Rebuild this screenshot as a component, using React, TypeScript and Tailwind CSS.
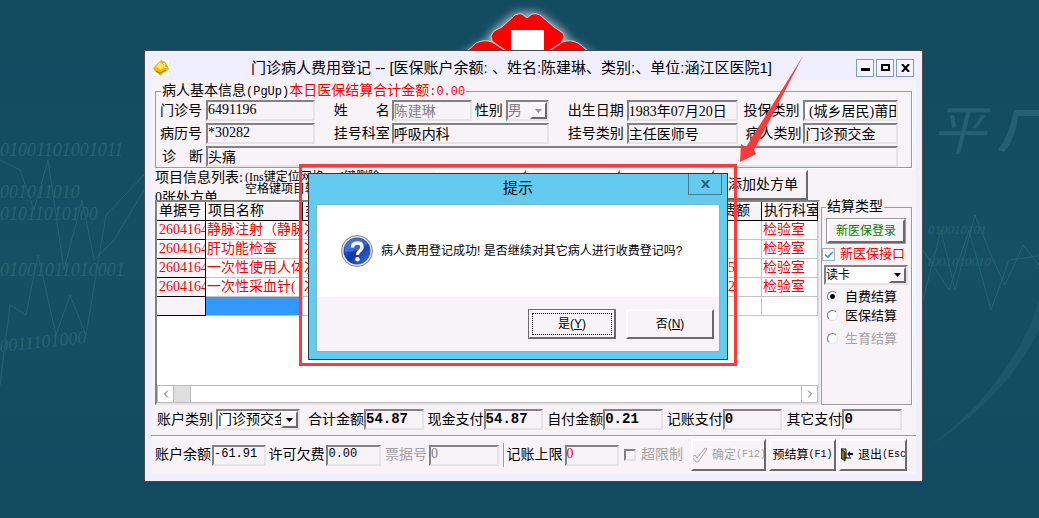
import type { ReactNode } from "react";
import clsx from "clsx";
import { Check, ChevronLeft, ChevronRight } from "lucide-react";

const sunken =
  "border-2 border-t-[#848184] border-l-[#848184] border-r-[#e6e3e6] border-b-[#e6e3e6]";
const raised =
  "border-2 border-t-white border-l-white border-r-[#6b696b] border-b-[#6b696b] bg-[#f7f3f7]";
const etched = "border border-[#9c9a9c] shadow-[1px_1px_0_#fff]";
const mono = "font-['Liberation_Mono','Noto_Sans_CJK_SC',monospace]";

const items = [
  { no: "2604164", name: "静脉注射（静脉", unit: "次", fee: "3", dept: "检验室" },
  { no: "2604164", name: "肝功能检查", unit: "次", fee: "", dept: "检验室" },
  { no: "2604164", name: "一次性使用人体", unit: "次", fee: "75", dept: "检验室" },
  { no: "2604164", name: "一次性采血针(", unit: "次", fee: "32", dept: "检验室" },
];

const totals = [
  { id: "total", label: "合计金额", value: "54.87" },
  { id: "cash", label: "现金支付", value: "54.87" },
  { id: "self", label: "自付金额", value: "0.21" },
  { id: "account", label: "记账支付", value: "0" },
  { id: "other", label: "其它支付", value: "0" },
];

function Field({ id, value, className }: { id: string; value: string; className?: string }) {
  return (
    <input
      id={id}
      defaultValue={value}
      className={clsx("h-[21px] w-full min-w-0 pb-0.5 leading-4 outline-none", sunken, className)}
    />
  );
}

function Label({ htmlFor, children, className }: { htmlFor: string; children: ReactNode; className?: string }) {
  return (
    <label htmlFor={htmlFor} className={clsx("shrink-0 whitespace-nowrap", className)}>
      {children}
    </label>
  );
}

function DropDown({ id, value, disabled, className }: { id: string; value: string; disabled?: boolean; className?: string }) {
  return (
    <span className={clsx("flex overflow-hidden", sunken, className)}>
      <select
        id={id}
        disabled={disabled}
        className="min-w-0 flex-1 appearance-none overflow-hidden whitespace-nowrap leading-4 outline-none disabled:text-[#848184] disabled:opacity-100"
      >
        <option>{value}</option>
      </select>
      <span className={clsx("pointer-events-none flex w-[17px] shrink-0 items-center justify-center", raised)}>
        <svg viewBox="0 0 7 4" className={clsx("h-1 w-[7px] shrink-0", disabled ? "fill-[#949294]" : "fill-black")}>
          <path d="M0 0h7L3.5 4z" />
        </svg>
      </span>
    </span>
  );
}

function Wallpaper() {
  return (
    <svg
      className="absolute inset-0 h-full w-full"
      viewBox="0 0 1039 518"
      preserveAspectRatio="xMidYMid slice"
      aria-hidden="true"
    >
      <defs>
        <linearGradient id="sea" x1="0" y1="0" x2="0" y2="1">
          <stop offset="0" stopColor="#124a60" />
          <stop offset="0.5" stopColor="#155064" />
          <stop offset="1" stopColor="#124a60" />
        </linearGradient>
        <filter id="glow" x="-30%" y="-50%" width="160%" height="200%">
          <feGaussianBlur stdDeviation="5" />
        </filter>
      </defs>
      <rect width="1039" height="518" fill="url(#sea)" />
      <g fill="#286373" fontFamily="Liberation Serif" fontSize="18" fontStyle="italic">
        <text x="0" y="156">01001101001011</text>
        <text x="0" y="198">001011010</text>
        <text x="0" y="220">01011010100</text>
        <text x="0" y="276">01001011010001</text>
        <text x="0" y="352" transform="rotate(-6 0 352)">0011101000</text>
        <text x="928" y="234" fontSize="13">010010101</text>
        <text x="926" y="266" fontSize="13">1001010010</text>
      </g>
      <g fill="none" stroke="#266274" strokeWidth="1">
        <path d="M0 160l20 10 14 40 14-50 16 110 18-70 12 60 20-20 30-50" />
        <path d="M0 385l10-80 16 10 12-60 18 80 14-40 16 40 20-120 38-40" />
        <path d="M923 300l18-70 14 60 20-75 16 40 14 30 18-40 16 20" />
        <path d="M923 250l26 40 20-60 22 80 18-50 30-4" />
      </g>
      <path d="M1039 300c-14 50-60 115-116 150 50-30 92-70 116-120z" fill="#1b5769" />
      <g fill="#246072" fontFamily="Noto Sans CJK SC" fontStyle="italic" fontSize="54">
        <text x="932" y="150">平</text>
        <path d="M1014 110h25v6h-21q-2 22-14 36l-6-2q12-16 16-40z" />
      </g>
      <g filter="url(#glow)" fill="#b4cdd4">
        <path d="M458 58l30-18 4-8 24-19h22l26 19 4 8 30 18z" />
      </g>
      <g fill="#fe0000" stroke="#f0c4c0" strokeWidth="1">
        <path d="M491 36l3-5 8-4 13-12q4-2 7-1l5 4 5-4q4-1 8 1l14 12 9 6 1 4-3 6-14 9h-39l-16-11z" />
        <path d="M464 54l12-11q8-4 16-1l18 12zM592 54l-14-11q-8-4-15-1l-18 12z" />
      </g>
      <path d="M511 30h33v26h-33z" fill="#fff" />
    </svg>
  );
}

function TitleBar() {
  const box = "flex h-[18px] w-[18px] items-center justify-center border border-[#849abd] bg-[#f4f4ff]";
  return (
    <header className="flex h-[29px] items-center px-0.5 pt-1">
      <svg viewBox="0 0 16 16" className="h-4 w-4 shrink-0" aria-hidden="true">
        <path d="M0 0h16v16H0z" fill="#fff" />
        <path d="M0 8l5-5 3-3 3 1 3 3 2 5-3 3-3 1-2 3-4-3-2-2z" fill="#e9b90c" />
        <path d="M3 7l4-5 5 4-4 4z" fill="#fbe45a" />
        <path d="M3 11l4 2 6-3" stroke="#a97a08" fill="none" />
        <path d="M10 3l2 1-1 3 3 1" stroke="#fff2a0" fill="none" />
      </svg>
      <h1 className="flex-1 whitespace-nowrap pr-0.5 text-center text-[15px] leading-5">
        门诊病人费用登记 -- [医保账户余额: 、姓名:陈建琳、类别:、单位:涵江区医院1]
      </h1>
      <div className="flex gap-0.5">
        <button aria-label="最小化" className={box}>
          <span className="mt-1 h-[3px] w-[9px] bg-black" />
        </button>
        <button aria-label="最大化" className={box}>
          <span className="h-[7px] w-[9px] border-2 border-black" />
        </button>
        <button aria-label="关闭" className={box}>
          <svg viewBox="0 0 9 8" className="h-2 w-[9px]">
            <path d="M1 0l7 8M8 0L1 8" stroke="#000" strokeWidth="2" />
          </svg>
        </button>
      </div>
    </header>
  );
}

function PatientInfo() {
  return (
    <fieldset className={clsx("mx-1 pl-1 pr-[13px]", etched)}>
      <legend className="ml-px whitespace-nowrap px-px leading-4">
        病人基本信息<span className={clsx("text-xs", mono)}>(PgUp)</span>
        <span className="text-[#ff0000]">
          本日医保结算合计金额<span className={clsx("text-xs", mono)}>:0.00</span>
        </span>
      </legend>
      <div className="grid grid-cols-[46px_108fr_77px_156fr_78px_111fr_65px_94fr] items-center gap-y-0.5">
        <Label htmlFor="clinic">门诊号</Label>
        <Field id="clinic" value="6491196" />
        <Label htmlFor="name" className="ml-[19px] mr-0.5 flex justify-between">
          <span>姓</span>
          <span>名</span>
        </Label>
        <div className="flex min-w-0 items-center">
          <Field id="name" value="陈建琳" className="flex-1 text-[#848184]" />
          <Label htmlFor="sex" className="px-[3px]">性别</Label>
          <DropDown id="sex" value="男" disabled className="h-[21px] w-[43px] shrink-0" />
        </div>
        <Label htmlFor="birth" className="pr-[3px] text-right">出生日期</Label>
        <Field id="birth" value="1983年07月20日" />
        <Label htmlFor="insurance" className="pr-1 text-right">投保类别</Label>
        <Field id="insurance" value=" (城乡居民)莆田" className="bg-white" />

        <Label htmlFor="record">病历号</Label>
        <Field id="record" value="*30282" />
        <Label htmlFor="dept" className="pr-0.5 text-right">挂号科室</Label>
        <Field id="dept" value="呼吸内科" />
        <Label htmlFor="regtype" className="pr-[3px] text-right">挂号类别</Label>
        <Field id="regtype" value="主任医师号" />
        <Label htmlFor="ptype" className="pr-0.5 text-right">病人类别</Label>
        <Field id="ptype" value="门诊预交金" />

        <Label htmlFor="diag" className="ml-0.5 mr-[3px] flex justify-between">
          <span>诊</span>
          <span>断</span>
        </Label>
        <div className="col-span-7">
          <Field id="diag" value="头痛" />
        </div>
      </div>
    </fieldset>
  );
}

function ItemToolbar() {
  const button = clsx("h-[30px] w-[90px] whitespace-nowrap", raised);
  return (
    <div className="flex h-8 items-start overflow-hidden">
      <div className="w-[90px] shrink-0 whitespace-nowrap leading-5">
        <p>项目信息列表:</p>
        <p>0张处方单</p>
      </div>
      <div className="w-[190px] shrink-0 whitespace-nowrap pt-[3px] text-xs leading-3">
        <p>(Ins键定位网格,Del键删除</p>
        <p>空格键项目转换)</p>
      </div>
      <div className="mr-3 mt-0.5 flex flex-1 justify-end gap-1">
        <button aria-label="项目模板" className={button} />
        <button aria-label="删除项目" className={button} />
        <button aria-label="删除处方" className={button} />
        <button className={button}>添加处方单</button>
      </div>
    </div>
  );
}

function ItemTable() {
  const head =
    "h-[19px] overflow-hidden whitespace-nowrap border-b border-r border-black bg-[#f7f3f7] p-0 pl-0.5 text-left font-normal shadow-[inset_1px_1px_0_#fff]";
  const cell =
    "h-[19px] overflow-hidden whitespace-nowrap border-b border-r border-[#c6c3c6] p-0 pl-px";
  return (
    <div className={clsx("flex flex-1 flex-col overflow-hidden bg-white", sunken)}>
      <table className="w-full table-fixed border-separate border-spacing-0 leading-4">
        <colgroup>
          <col className="w-[49px]" />
          <col className="w-[97px]" />
          <col />
          <col className="w-[42px]" />
          <col className="w-[56px]" />
        </colgroup>
        <thead>
          <tr>
            <th className={head}>单据号</th>
            <th className={head}>项目名称</th>
            <th className={head}>类别</th>
            <th className={head}>费额</th>
            <th className={head}>执行科室</th>
          </tr>
        </thead>
        <tbody className="text-[#ff0000]">
          {items.map((item, i) => (
            <tr key={i}>
              <td className={head}>{item.no}</td>
              <td className={cell}>{item.name}</td>
              <td className={cell}>{item.unit}</td>
              <td className={cell}>{item.fee}</td>
              <td className={cell}>{item.dept}</td>
            </tr>
          ))}
          <tr>
            <td className={head} />
            <td className={clsx(cell, "bg-[#3199ff]")} />
            <td className={cell} />
            <td className={cell} />
            <td className={cell} />
          </tr>
        </tbody>
      </table>
      <div className="mt-auto flex h-[18px] border border-[#bdbabd] bg-white text-[#636163]">
        <button aria-label="向左" className="flex w-4 items-center justify-center border-r border-[#bdbabd]">
          <ChevronLeft size={12} />
        </button>
        <span className="w-[17px] border-r border-[#bdbabd] bg-[#dedfde]" />
        <button aria-label="向右" className="ml-auto flex w-4 items-center justify-center border-l border-[#bdbabd]">
          <ChevronRight size={12} />
        </button>
      </div>
    </div>
  );
}

function Settlement() {
  const radio =
    "h-[11px] w-[11px] shrink-0 appearance-none rounded-full border border-t-[#737173] border-l-[#737173] border-r-[#e6e3e6] border-b-[#e6e3e6] bg-white checked:bg-[radial-gradient(circle,#000_2px,#fff_3px)]";
  return (
    <fieldset className={clsx("mt-[31px] w-[91px] shrink-0", etched)}>
      <legend className="ml-1 px-px leading-4">结算类型</legend>
      <button
        className={clsx("ml-[5px] mt-1 block h-6 w-[78px] text-xs text-[#008200] outline outline-[#9c9a9c]", raised)}
      >
        新医保登录
      </button>
      <label className="mt-0.5 flex h-[18px] items-center whitespace-nowrap text-[13px] text-[#ff0000]">
        <span className="relative flex">
          <input type="checkbox" defaultChecked className="h-[13px] w-[13px] appearance-none border border-[#adaead] bg-white" />
          <Check size={10} strokeWidth={4} className="pointer-events-none absolute left-0.5 top-0.5 text-[#2196f3]" />
        </span>
        <span className="ml-[5px]">新医保接口</span>
      </label>
      <label htmlFor="card" className="sr-only">读卡方式</label>
      <DropDown id="card" value="读卡" className="ml-0.5 mt-0.5 h-5 w-[84px] bg-white text-xs" />
      <div className="mt-0.5 whitespace-nowrap pl-[5px] text-[13px] leading-[19px]">
        <label className="flex items-center gap-[7px]">
          <input type="radio" name="settle" defaultChecked className={radio} />
          自费结算
        </label>
        <label className="flex items-center gap-[7px]">
          <input type="radio" name="settle" className={radio} />
          医保结算
        </label>
        <label className="mt-1 flex items-center gap-[7px] text-[#a5a2a5]">
          <input type="radio" name="settle" disabled className={radio} />
          生育结算
        </label>
      </div>
    </fieldset>
  );
}

function Totals() {
  return (
    <div className="flex items-center pb-[5px] pl-1.5 pr-[14px] pt-1">
      <Label htmlFor="acctype">账户类别</Label>
      <DropDown id="acctype" value="门诊预交金" className="ml-[3px] mr-2 h-[21px] w-[84px] shrink-0 bg-white" />
      <div className="flex flex-1 gap-1">
        {totals.map((t) => (
          <div key={t.id} className="flex min-w-0 flex-1 items-center">
            <Label htmlFor={t.id}>{t.label}</Label>
            <Field id={t.id} value={t.value} className={clsx("flex-1 font-bold", mono)} />
          </div>
        ))}
      </div>
    </div>
  );
}

function ActionBar() {
  const button = clsx("flex h-8 items-center justify-center overflow-hidden whitespace-nowrap text-xs", raised);
  return (
    <div className="flex items-center border-t border-[#9c9a9c] pb-[3px] pl-1 pr-[9px] pt-[3px] shadow-[inset_0_1px_0_#fff]">
      <Label htmlFor="balance" className="pr-px">账户余额</Label>
      <Field id="balance" value="-61.91" className={clsx("flex-1 text-xs", mono)} />
      <Label htmlFor="owe" className="px-0.5">许可欠费</Label>
      <Field id="owe" value="0.00" className={clsx("flex-1 text-xs", mono)} />
      <Label htmlFor="bill" className="pl-1 pr-0.5 text-[#a5a2a5]">票据号</Label>
      <Field id="bill" value="0" className="flex-[1.3] text-[#848184]" />
      <span className="ml-1 h-6 w-0.5 border-l border-r border-l-[#9c9a9c] border-r-white" />
      <Label htmlFor="limit" className="px-0.5">记账上限</Label>
      <Field id="limit" value="0" className="flex-1 text-[#ff0000]" />
      <label className="ml-[5px] flex shrink-0 items-center gap-[5px] whitespace-nowrap text-[#a5a2a5]">
        <input type="checkbox" disabled className={clsx("h-3 w-3 appearance-none", sunken)} />
        超限制
      </label>
      <div className="ml-2 flex shrink-0 gap-[3px]">
        <button disabled className={clsx(button, "w-[75px] text-[#a5a2a5]")}>
          <svg viewBox="0 0 17 16" className="mr-1 h-4 w-[17px] shrink-0" aria-hidden="true">
            <path d="M1 10l3-2 2 3L14 1l2 1L7 15H5z" fill="#f7f3f7" stroke="#a5a2a5" />
          </svg>
          确定<span className={clsx("text-[10px]", mono)}>(F12)</span>
        </button>
        <button className={clsx(button, "w-[67px]")}>
          预结算<span className={clsx("text-[10px]", mono)}>(F1)</span>
        </button>
        <button className={clsx(button, "w-[68px]")}>
          <svg viewBox="0 0 14 14" className="mr-1 h-3.5 w-3.5 shrink-0" aria-hidden="true">
            <path d="M1 1h5v9H1z" fill="#fff" stroke="#000" />
            <path d="M1 1l4 3v9l-4-3z" fill="#848200" stroke="#000" />
            <path d="M6 10h5" stroke="#000" />
            <path d="M7 6l3-3v2h3v2h-3v2z" fill="#000084" />
          </svg>
          退出<span className={clsx("text-[10px]", mono)}>(Esc</span>
        </button>
      </div>
    </div>
  );
}

function ConfirmDialog() {
  return (
    <div
      role="dialog"
      aria-label="提示"
      className="absolute left-[163px] top-[122px] w-[420px] border border-[#21384a] bg-[#63cbf0] px-[7px] pb-[7px]"
    >
      <h2 className="h-[30px] text-center text-[15px] leading-7">提示</h2>
      <button
        aria-label="关闭"
        className="absolute right-[5px] top-0 flex h-[21px] w-[34px] items-center justify-center border border-t-0 border-[#4a7a8c]"
      >
        <svg viewBox="0 0 9 8" className="h-2 w-[9px]">
          <path d="M1 0l7 8M8 0L1 8" stroke="#2f6173" strokeWidth="2" />
        </svg>
      </button>
      <div className="border border-[#7fb6cf] bg-[#f7f3f7]">
        <div className="flex h-[92px] items-center gap-2 bg-white pl-6">
          <svg viewBox="0 0 32 32" className="h-8 w-8 shrink-0" aria-hidden="true">
            <defs>
              <linearGradient id="ball" x1="0" y1="0" x2="1" y2="1">
                <stop offset="0" stopColor="#3f6fe0" />
                <stop offset="0.5" stopColor="#1038a0" />
                <stop offset="1" stopColor="#3f72e8" />
              </linearGradient>
            </defs>
            <circle cx="16" cy="16" r="15.5" fill="#e8e8e8" stroke="#848284" />
            <circle cx="16" cy="16" r="13.5" fill="url(#ball)" />
            <path d="M4 12a13 13 0 0 1 23-3q-10 8-23 8z" fill="#5f8cf0" opacity=".5" />
            <path d="M11.500 12.500q0-4.500 5-4.500 4.500 0 4.500 4 0 2.500-2.500 4-2 1.500-2 4" fill="none" stroke="#fff" strokeWidth="3.400" />
            <circle cx="16.500" cy="24.200" r="2.200" fill="#fff" />
          </svg>
          <p className="whitespace-nowrap font-['Liberation_Sans','Noto_Sans_CJK_SC',sans-serif] text-xs leading-4">
            病人费用登记成功! 是否继续对其它病人进行收费登记吗?
          </p>
        </div>
        <div className="flex justify-end gap-2.5 px-[5px] py-3 font-['Liberation_Sans','Noto_Sans_CJK_SC',sans-serif] text-xs">
          <button className={clsx("h-[30px] w-[88px] p-0.5 outline -outline-offset-1 outline-[#6b696b]", raised)}>
            <span className="flex h-full items-center justify-center border border-dotted border-black">
              是(<u>Y</u>)
            </span>
          </button>
          <button className={clsx("h-[30px] w-[88px]", raised)}>
            否(<u>N</u>)
          </button>
        </div>
      </div>
    </div>
  );
}

export default function App() {
  return (
    <div className="relative min-h-screen overflow-hidden bg-[#124a60] pb-9 pl-36 pr-[116px] pt-[50px] font-['Liberation_Serif','Noto_Sans_CJK_SC',sans-serif] text-sm leading-4 text-black">
      <Wallpaper />
      <main className="relative border border-[#4a494a] bg-[#efefff] px-1.5 pb-[7px]">
        <div className="font-['Liberation_Sans','Noto_Sans_CJK_SC',sans-serif]">
          <TitleBar />
        </div>
        <div className="bg-[#f7f3f7] pt-[3px]">
          <PatientInfo />
          <div className="flex gap-px px-1">
            <div className="flex min-h-[237px] min-w-0 flex-1 flex-col">
              <ItemToolbar />
              <ItemTable />
            </div>
            <Settlement />
          </div>
          <Totals />
          <ActionBar />
        </div>
        <ConfirmDialog />
        {/* highlight frame and arrow drawn over the dialog */}
        <div className="pointer-events-none absolute left-[154px] top-[113px] h-[202px] w-[438px] border-[3px] border-[#ff3839]" />
        <svg
          viewBox="0 0 65 108"
          className="pointer-events-none absolute left-[594px] top-1 h-[108px] w-[65px]"
          aria-hidden="true"
        >
          <path d="M64 1L15 95l2 4L1 107 2 89l5 3z" fill="#ff3839" />
        </svg>
      </main>
    </div>
  );
}
